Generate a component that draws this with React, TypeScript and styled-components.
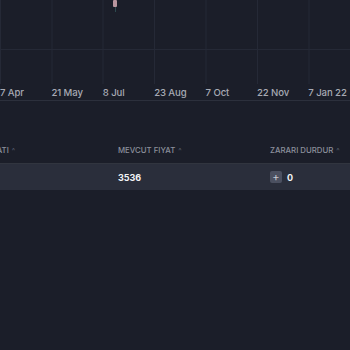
import React from "react";
import styled, { createGlobalStyle } from "styled-components";

const GlobalStyle = createGlobalStyle`
  html, body {
    margin: 0;
    padding: 0;
    background: #1b1e29;
    font-family: Inter, "Noto Sans", "Liberation Sans", sans-serif;
    overflow: hidden;
  }
`;

const ticks = ["7 Apr", "21 May", "8 Jul", "23 Aug", "7 Oct", "22 Nov", "7 Jan 22"];

const Page = styled.div`
  width: 350px;
  height: 350px;
  background: #1b1e29;
  overflow: hidden;
`;

const Chart = styled.div`
  position: relative;
  height: 100px;
  border-bottom: 1px solid #2c303c;
`;

const Grid = styled.svg`
  position: absolute;
  left: 0;
  top: 0;
`;

const Axis = styled.div`
  position: absolute;
  left: 0;
  right: 0;
  bottom: 2px;
  display: flex;
`;

const Tick = styled.span`
  flex: 0 0 51.4px;
  font-size: 9.6px;
  font-weight: 500;
  color: #a7aab4;
  white-space: nowrap;
  letter-spacing: -0.1px;
`;

const Table = styled.div`
  margin-top: 39px;
  margin-left: -34px;
`;

const HeadRow = styled.div`
  display: grid;
  grid-template-columns: repeat(3, 152px);
  height: 20px;
  align-items: center;
`;

const HeadCell = styled.div`
  display: flex;
  align-items: center;
  gap: 3px;
  font-size: 7.8px;
  font-weight: 500;
  color: #8c909c;
  text-transform: uppercase;
  white-space: nowrap;
`;

const Caret = styled.span`
  font-size: 7px;
  color: #5a5f6c;
`;

const Row = styled.div`
  display: grid;
  grid-template-columns: repeat(3, 152px);
  height: 26px;
  align-items: center;
  margin-top: 3px;
  background: #2a2e3b;
  width: 384px;
  border-top: 1px solid #31353f;
`;

const Value = styled.div`
  display: flex;
  align-items: center;
  gap: 5px;
  font-size: 9px;
  font-weight: 700;
  color: #f2f3f5;
`;

const PlusBtn = styled.span`
  width: 12px;
  height: 12px;
  border-radius: 2px;
  background: #4b5060;
  color: #c9ccd4;
  display: flex;
  align-items: center;
  justify-content: center;
  font-size: 11px;
  font-weight: 400;
  line-height: 1;
`;

export default function App() {
  const vx = [0, 51.5, 102.5, 154, 205.5, 257, 308.5];
  return (
    <Page>
      <GlobalStyle />
      <Chart>
        <Grid width="350" height="100">
          {vx.map((x) => (
            <line key={x} x1={x + 0.5} y1={0} x2={x + 0.5} y2={84} stroke="#252936" strokeWidth={1} />
          ))}
          <line x1={0} y1={49.5} x2={350} y2={49.5} stroke="#252936" strokeWidth={1} />
          <line x1={115.5} y1={6} x2={115.5} y2={12} stroke="#2d4a4e" strokeWidth={1} />
          <rect x={113} y={0} width={4} height={7} rx={1} fill="#b9969f" />
        </Grid>
        <Axis>
          {ticks.map((t) => (
            <Tick key={t}>{t}</Tick>
          ))}
        </Axis>
      </Chart>
      <Table>
        <HeadRow>
          <HeadCell>
            Alış fiyatı <Caret>^</Caret>
          </HeadCell>
          <HeadCell>
            Mevcut fiyat <Caret>^</Caret>
          </HeadCell>
          <HeadCell>
            Zararı durdur <Caret>^</Caret>
          </HeadCell>
        </HeadRow>
        <Row>
          <Value />
          <Value>3536</Value>
          <Value>
            <PlusBtn>+</PlusBtn>0
          </Value>
        </Row>
      </Table>
    </Page>
  );
}
